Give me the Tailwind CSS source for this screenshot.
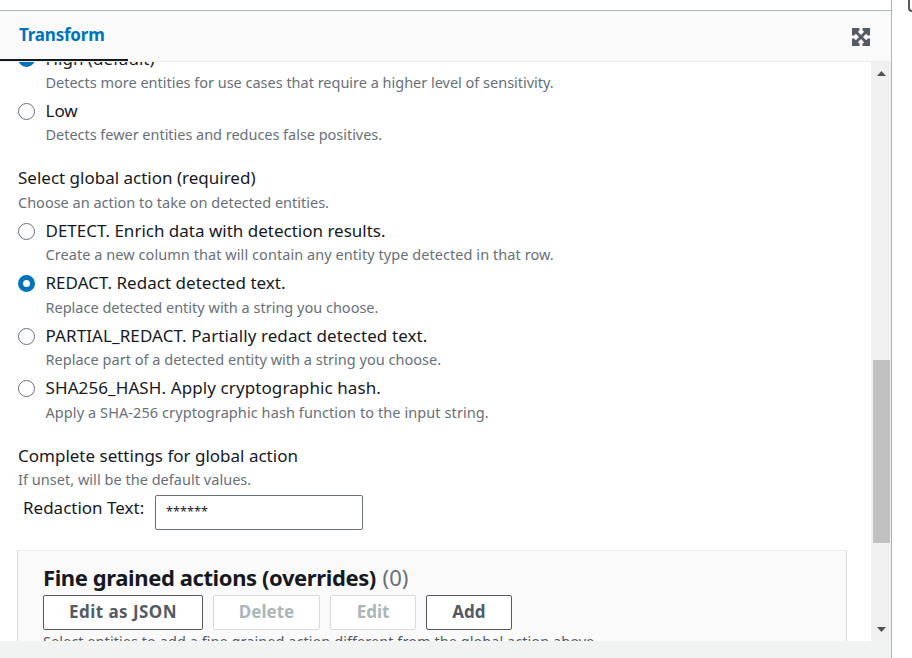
<!DOCTYPE html>
<html lang="en">
<head>
<meta charset="utf-8">
<title>Transform</title>
<script src="https://cdn.jsdelivr.net/npm/@tailwindcss/browser@4"></script>
</head>
<body class="w-[912px] h-[658px] overflow-hidden bg-white font-['Noto_Sans',sans-serif] text-[#16191f]">
<div class="flex h-[658px]">
  <div class="flex flex-col w-[892px] border-r border-[#aab7b8]">
    <div class="h-[10px] shrink-0"></div>
    <header class="relative z-10 flex h-[52px] shrink-0 justify-between border-t border-[#aab7b8] border-b border-b-[#eaeded] bg-[#fafafa]">
      <div class="flex w-[128px] items-center border-b-2 border-[#16191f] pb-px pl-[19px]"><span class="whitespace-nowrap text-[17px] font-bold tracking-[-0.2px] text-[#0073bb]">Transform</span></div>
      <svg class="mt-[17px] mr-[21px] size-[18px]" viewBox="0 0 18 18" fill="#545b64"><path d="M0 0h7.500v2.200L5.800 3.800 9 7l3.200-3.200-1.700-1.600V0H18v7.500h-2.200l-1.600-1.700L11 9l3.200 3.200 1.600-1.700H18V18h-7.500v-2.200l1.700-1.600L9 11l-3.200 3.200 1.700 1.600V18H0v-7.500h2.200l1.600 1.700L7 9 3.800 5.800 2.200 7.500H0z"/></svg>
    </header>
    <div class="flex h-[579px] shrink-0 overflow-hidden">
      <main class="w-[871px] overflow-hidden pl-[18px] whitespace-nowrap text-[17px]">
        <div class="-mt-[17.5px]">
          <div class="flex h-[52.5px] gap-[10.5px]"><i class="mt-[5.5px] size-[17px] shrink-0 rounded-full border-[5px] border-[#0073bb]"></i><div><div class="h-[27.4px] leading-[28px]">High (default)</div><div class="h-[20px] text-[14.5px] leading-[20px] tracking-[-0.013px] text-[#687078]">Detects more entities for use cases that require a higher level of sensitivity.</div></div></div>
          <div class="flex h-[52.5px] gap-[10.5px]"><i class="mt-[6px] size-[17px] shrink-0 rounded-full border border-[#687078]"></i><div><div class="h-[27.4px] leading-[28px]">Low</div><div class="h-[20px] text-[14.5px] leading-[20px] tracking-[-0.03px] text-[#687078]">Detects fewer entities and reduces false positives.</div></div></div>
        </div>
        <div class="mt-[14.5px]">
          <div class="h-[28px] leading-[28px]">Select global action (required)</div>
          <div class="h-[24.5px] text-[14.5px] leading-[20px] text-[#687078]">Choose an action to take on detected entities.</div>
          <div class="flex h-[52.5px] gap-[10.5px]"><i class="mt-[6.5px] size-[17px] shrink-0 rounded-full border border-[#687078]"></i><div><div class="h-[27.5px] leading-[28px]">DETECT. Enrich data with detection results.</div><div class="h-[20px] text-[14.5px] leading-[20px] tracking-[0.06px] text-[#687078]">Create a new column that will contain any entity type detected in that row.</div></div></div>
          <div class="flex h-[52.5px] gap-[10.5px]"><i class="mt-[6px] size-[17px] shrink-0 rounded-full border-[5px] border-[#0073bb]"></i><div><div class="h-[27.5px] leading-[28px] tracking-[0.03px]">REDACT. Redact detected text.</div><div class="h-[20px] text-[14.5px] leading-[20px] text-[#687078]">Replace detected entity with a string you choose.</div></div></div>
          <div class="flex h-[52.5px] gap-[10.5px]"><i class="mt-[6.5px] size-[17px] shrink-0 rounded-full border border-[#687078]"></i><div><div class="h-[27.5px] leading-[28px] tracking-[0.095px]">PARTIAL_REDACT. Partially redact detected text.</div><div class="h-[20px] text-[14.5px] leading-[20px] tracking-[0.02px] text-[#687078]">Replace part of a detected entity with a string you choose.</div></div></div>
          <div class="flex h-[52.5px] gap-[10.5px]"><i class="mt-[6px] size-[17px] shrink-0 rounded-full border border-[#687078]"></i><div><div class="h-[27.5px] leading-[28px] tracking-[0.1px]">SHA256_HASH. Apply cryptographic hash.</div><div class="h-[20px] text-[14.5px] leading-[20px] tracking-[0.085px] text-[#687078]">Apply a SHA-256 cryptographic hash function to the input string.</div></div></div>
        </div>
        <div class="mt-[15.5px]">
          <div class="h-[27px] leading-[28px]">Complete settings for global action</div>
          <div class="h-[26px] text-[14.5px] leading-[20px] tracking-[0.03px] text-[#687078]">If unset, will be the default values.</div>
          <div class="flex"><div class="w-[137px] pl-[5px] leading-[26px]">Redaction Text:</div><div class="h-[35px] w-[208px] rounded-[2px] border border-[#687078] pl-[10px] text-[12.7px] leading-[31px]">******</div></div>
        </div>
        <section class="mt-[20px] -ml-px h-[120px] w-[830px] border border-[#d5dbdb] border-t-[#eaeded] bg-[#fafafa] pt-[10px] pl-[25px]">
          <h2 class="h-[34px] text-[22px] leading-[33px]"><b class="tracking-[-0.4px]">Fine grained actions (overrides)</b> <span class="ml-px text-[#687078]">(0)</span></h2>
          <div class="flex gap-[10px] font-bold leading-[32px] text-[#545b64] *:flex *:h-[35px] *:justify-center *:rounded-[2px] *:border *:bg-white">
            <div class="w-[160px] border-[#545b64] tracking-[0.45px]">Edit as JSON</div>
            <div class="w-[107px] border-[#d5dbdb] text-[#aab7b8]">Delete</div>
            <div class="w-[86px] border-[#d5dbdb] text-[#aab7b8]">Edit</div>
            <div class="w-[86px] border-[#545b64]">Add</div>
          </div>
          <div class="text-[14.5px] leading-[23px] tracking-[0.05px] text-[#545b64]">Select entities to add a fine grained action different from the global action above.</div>
        </section>
      </main>
      <div class="flex w-[20px] flex-col bg-[#f0f0f0] pl-[2px]">
        <svg class="mt-[9px] ml-[4px] h-[5px] w-[9px]" viewBox="0 0 9 5" fill="#505050"><path d="M0 5L4.5 0 9 5z"/></svg>
        <div class="mt-[284px] h-[183px] w-[17px] bg-[#c1c1c1]"></div>
        <svg class="mt-[84px] ml-[4px] h-[5px] w-[9px]" viewBox="0 0 9 5" fill="#505050"><path d="M0 0L4.5 5 9 0z"/></svg>
      </div>
    </div>
    <div class="grow bg-[#f1f3f3]"></div>
  </div>
  <div class="flex grow justify-end overflow-hidden"><div class="-mr-[12px] h-[12px] w-[16px] rounded-bl-[4px] border-b-2 border-l-2 border-[#545b64]"></div></div>
</div>
</body>
</html>
